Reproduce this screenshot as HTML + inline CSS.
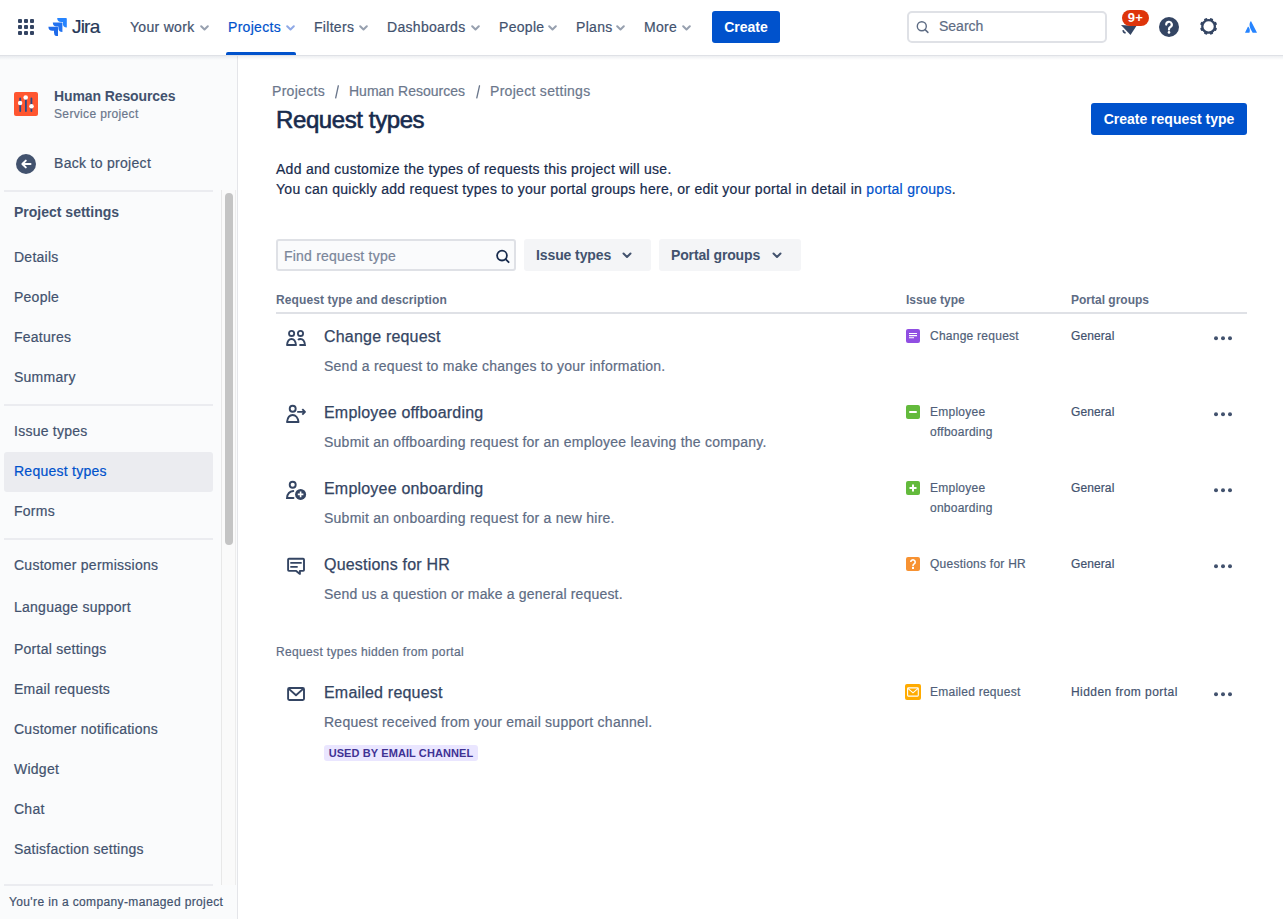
<!DOCTYPE html>
<html><head><meta charset="utf-8">
<style>
*{box-sizing:border-box;margin:0;padding:0}
html,body{width:1283px;height:919px;overflow:hidden;background:#fff}
body{font-family:"Liberation Sans",sans-serif;color:#172B4D;position:relative;-webkit-text-stroke-width:0.2px}
.a{position:absolute;white-space:nowrap}
#nav{position:absolute;left:0;top:0;width:1283px;height:56px;background:#fff;border-bottom:1px solid #DFE1E6;z-index:5}
#navsh{position:absolute;left:0;top:56px;width:1283px;height:4px;background:linear-gradient(rgba(9,30,66,0.07),rgba(9,30,66,0));z-index:4}
.ni{position:absolute;top:18px;font-size:14px;line-height:18px;color:#42526E;letter-spacing:0.3px;white-space:nowrap}
.chev{position:absolute;top:24.5px}
#side{position:absolute;left:0;top:56px;width:238px;height:863px;background:#FAFBFC;border-right:1px solid #E4E5E9}
.si{position:absolute;left:14px;font-size:14px;line-height:18px;color:#42526E;letter-spacing:0.25px;white-space:nowrap}
.dv{position:absolute;left:4px;width:209px;height:2px;background:#EBECF0}
.rt{position:absolute;left:324px;font-size:16px;line-height:20px;color:#344563;letter-spacing:0.2px;white-space:nowrap;-webkit-text-stroke:0.25px #344563}
.rd{position:absolute;left:324px;font-size:14px;line-height:20px;color:#5E6C84;letter-spacing:0.24px;white-space:nowrap}
.it{position:absolute;left:930px;font-size:12px;line-height:20px;color:#505F79;letter-spacing:0.25px;white-space:nowrap}
.pg{position:absolute;left:1071px;font-size:12px;line-height:20px;color:#42526E;letter-spacing:0.1px;white-space:nowrap}
.dots{position:absolute;left:1213px}
.ic{position:absolute;left:282px}
.iti{position:absolute;left:906px;width:14px;height:14px;border-radius:2px}
</style></head><body>
<div id="nav">
  <svg class="a" style="left:18px;top:19px" width="16" height="16" viewBox="0 0 16 16" fill="#344563">
    <rect x="0" y="0" width="4" height="4" rx="1"/><rect x="6" y="0" width="4" height="4" rx="1"/><rect x="12" y="0" width="4" height="4" rx="1"/>
    <rect x="0" y="6" width="4" height="4" rx="1"/><rect x="6" y="6" width="4" height="4" rx="1"/><rect x="12" y="6" width="4" height="4" rx="1"/>
    <rect x="0" y="12" width="4" height="4" rx="1"/><rect x="6" y="12" width="4" height="4" rx="1"/><rect x="12" y="12" width="4" height="4" rx="1"/>
  </svg>
  <svg class="a" style="left:48px;top:17px" width="19" height="19" viewBox="0 0 19 19">
    <path d="M18 1H9.2a4 4 0 0 0 4 4h1.6v1.6a4 4 0 0 0 4 3.9V1.8A.8.8 0 0 0 18 1z" fill="#2684FF"/>
    <path d="M13.6 5.4H4.8a4 4 0 0 0 4 4h1.6V11a4 4 0 0 0 4 4V6.2a.8.8 0 0 0-.8-.8z" fill="#2272F0"/>
    <path d="M9.2 9.8H.4a4 4 0 0 0 4 4H6v1.6a4 4 0 0 0 4 4V10.6a.8.8 0 0 0-.8-.8z" fill="#1F6BEA"/>
  </svg>
  <div class="a" style="left:72px;top:15px;font-size:19px;line-height:24px;color:#253858;letter-spacing:-0.8px">Jira</div>
  <div class="ni" style="left:130px">Your work</div>
  <div class="ni" style="left:228px;color:#0052CC">Projects</div>
  <div class="ni" style="left:314px">Filters</div>
  <div class="ni" style="left:387px">Dashboards</div>
  <div class="ni" style="left:499px">People</div>
  <div class="ni" style="left:576px">Plans</div>
  <div class="ni" style="left:644px">More</div>
  <svg class="chev" style="left:200px" width="9" height="6" viewBox="0 0 9 6"><path d="M1.2 1.2l3.3 3.3 3.3-3.3" fill="none" stroke="#97A0AF" stroke-width="2" stroke-linecap="round" stroke-linejoin="round"/></svg>
  <svg class="chev" style="left:286px" width="9" height="6" viewBox="0 0 9 6"><path d="M1.2 1.2l3.3 3.3 3.3-3.3" fill="none" stroke="#8FA9E6" stroke-width="2" stroke-linecap="round" stroke-linejoin="round"/></svg>
  <svg class="chev" style="left:359px" width="9" height="6" viewBox="0 0 9 6"><path d="M1.2 1.2l3.3 3.3 3.3-3.3" fill="none" stroke="#97A0AF" stroke-width="2" stroke-linecap="round" stroke-linejoin="round"/></svg>
  <svg class="chev" style="left:471px" width="9" height="6" viewBox="0 0 9 6"><path d="M1.2 1.2l3.3 3.3 3.3-3.3" fill="none" stroke="#97A0AF" stroke-width="2" stroke-linecap="round" stroke-linejoin="round"/></svg>
  <svg class="chev" style="left:548px" width="9" height="6" viewBox="0 0 9 6"><path d="M1.2 1.2l3.3 3.3 3.3-3.3" fill="none" stroke="#97A0AF" stroke-width="2" stroke-linecap="round" stroke-linejoin="round"/></svg>
  <svg class="chev" style="left:616px" width="9" height="6" viewBox="0 0 9 6"><path d="M1.2 1.2l3.3 3.3 3.3-3.3" fill="none" stroke="#97A0AF" stroke-width="2" stroke-linecap="round" stroke-linejoin="round"/></svg>
  <svg class="chev" style="left:682px" width="9" height="6" viewBox="0 0 9 6"><path d="M1.2 1.2l3.3 3.3 3.3-3.3" fill="none" stroke="#97A0AF" stroke-width="2" stroke-linecap="round" stroke-linejoin="round"/></svg>
  <div class="a" style="left:226px;top:52px;width:70px;height:3px;background:#0052CC;border-radius:2px 2px 0 0"></div>
  <div class="a" style="left:712px;top:11px;width:68px;height:32px;background:#0052CC;border-radius:3px;color:#fff;font-weight:bold;-webkit-text-stroke-width:0;font-size:14px;line-height:32px;text-align:center">Create</div>
  <div class="a" style="left:907px;top:11px;width:200px;height:32px;border:2px solid #DFE1E6;border-radius:5px;background:#fff"></div>
  <svg class="a" style="left:916px;top:21px" width="14" height="13" viewBox="0 0 14 13"><circle cx="5.8" cy="5.3" r="4.5" fill="none" stroke="#5E6C84" stroke-width="1.4"/><path d="M9.1 8.6l2.8 2.8" stroke="#5E6C84" stroke-width="1.5" stroke-linecap="round"/></svg>
  <div class="ni" style="left:939px;top:17px;color:#5E6C84;letter-spacing:0">Search</div>
  <!-- bell -->
  <svg class="a" style="left:1115px;top:8px" width="40" height="32" viewBox="0 0 40 32"><path d="M6 17L21.4 18 15.5 27Z" fill="#344563"/><path d="M8.3 22.2C8.1 23.5 9 24.6 10.6 24.9" fill="none" stroke="#344563" stroke-width="1.6"/></svg>
  <div class="a" style="left:1122px;top:10px;width:27px;height:16px;border-radius:8px;background:#DE350B;color:#fff;font-weight:bold;-webkit-text-stroke-width:0;font-size:13px;line-height:16px;text-align:center;letter-spacing:0.3px">9+</div>
  <!-- help -->
  <svg class="a" style="left:1159px;top:17px" width="20" height="20" viewBox="0 0 20 20"><circle cx="10" cy="10" r="10" fill="#344563"/><path d="M7.2 7.6a2.8 2.8 0 1 1 4.2 2.4c-.9.5-1.4 1-1.4 2v.6" fill="none" stroke="#fff" stroke-width="2.2" stroke-linecap="round"/><circle cx="10" cy="15.4" r="1.3" fill="#fff"/></svg>
  <!-- gear -->
  <svg class="a" style="left:1196px;top:14px" width="26" height="26" viewBox="0 0 26 26"><g transform="translate(12.6 12.4)" fill="#344563"><circle r="7.4"/><rect x="-1.7" y="-8.6" width="3.4" height="17.2" rx="1" transform="rotate(22.5)"/><rect x="-1.7" y="-8.6" width="3.4" height="17.2" rx="1" transform="rotate(67.5)"/><rect x="-1.7" y="-8.6" width="3.4" height="17.2" rx="1" transform="rotate(112.5)"/><rect x="-1.7" y="-8.6" width="3.4" height="17.2" rx="1" transform="rotate(157.5)"/><circle r="5.1" fill="#fff"/></g></svg>
  <!-- atlassian -->
  <svg class="a" style="left:1245px;top:21px" width="12" height="12" viewBox="0 0 12 12"><path d="M3.4 5.8c-.2-.2-.4-.2-.5 0L.1 11.4c-.1.2 0 .4.2.4h3.9c.1 0 .2-.1.3-.2.8-1.8.3-4.5-1.1-5.8z" fill="#2684FF"/><path d="M5.6.3c-1.5 2.4-1.4 5 .1 8l1.8 3.3c.1.1.2.2.3.2h3.9c.2 0 .3-.2.2-.4L6.1.3C6 .1 5.7.1 5.6.3z" fill="#2684FF"/></svg>
</div>
<div id="navsh"></div>
<div id="side">
</div>
<!-- sidebar contents (absolute to page) -->
<div class="a" style="left:14px;top:92px;width:24px;height:24px;border-radius:2px;background:#FF5630"></div>
<svg class="a" style="left:14px;top:92px" width="24" height="24" viewBox="0 0 24 24"><g stroke="#2A4B85" stroke-width="1.8" stroke-linecap="round"><path d="M6.2 6.5v12.5M11.9 6v13M17.4 6.5v12.5"/></g><g fill="#fff"><circle cx="6.1" cy="11" r="2.2"/><circle cx="11.7" cy="5.5" r="2.3"/><circle cx="17.5" cy="14.2" r="2.3"/></g></svg>
<div class="si" style="left:54px;top:87px;font-weight:bold;-webkit-text-stroke-width:0;letter-spacing:-0.1px">Human Resources</div>
<div class="a" style="left:54px;top:106px;font-size:12px;line-height:16px;color:#6B778C;letter-spacing:0.35px">Service project</div>
<svg class="a" style="left:16px;top:154px" width="20" height="20" viewBox="0 0 20 20"><circle cx="10" cy="10" r="10" fill="#42526E"/><path d="M14.5 10H6.5M9.8 6.6L6.4 10l3.4 3.4" fill="none" stroke="#fff" stroke-width="2" stroke-linecap="round" stroke-linejoin="round"/></svg>
<div class="si" style="left:54px;top:154px;letter-spacing:0.3px">Back to project</div>
<div class="dv" style="top:190px"></div>
<div class="si" style="top:203px;font-weight:bold;-webkit-text-stroke-width:0;letter-spacing:0">Project settings</div>
<div class="si" style="top:248px">Details</div>
<div class="si" style="top:288px">People</div>
<div class="si" style="top:328px">Features</div>
<div class="si" style="top:368px">Summary</div>
<div class="dv" style="top:404px"></div>
<div class="si" style="top:422px">Issue types</div>
<div class="a" style="left:4px;top:452px;width:209px;height:40px;border-radius:3px;background:#EBECF0"></div>
<div class="si" style="top:462px;color:#0052CC">Request types</div>
<div class="si" style="top:502px">Forms</div>
<div class="dv" style="top:538px"></div>
<div class="si" style="top:556px">Customer permissions</div>
<div class="si" style="top:598px">Language support</div>
<div class="si" style="top:640px">Portal settings</div>
<div class="si" style="top:680px">Email requests</div>
<div class="si" style="top:720px">Customer notifications</div>
<div class="si" style="top:760px">Widget</div>
<div class="si" style="top:800px">Chat</div>
<div class="si" style="top:840px">Satisfaction settings</div>
<!-- scrollbar -->
<div class="a" style="left:221px;top:190px;width:15px;height:695px;background:#FAFAFA;border-left:1px solid #E8E8E8;border-right:1px solid #EDEDED"></div>
<div class="a" style="left:225px;top:193px;width:8px;height:352px;border-radius:4px;background:#C4C4C4"></div>
<!-- footer -->
<div class="a" style="left:0;top:885px;width:237px;height:34px;background:#FAFBFC"></div>
<div class="dv" style="top:884px"></div>
<div class="a" style="left:9px;top:894px;font-size:12px;line-height:16px;color:#42526E;letter-spacing:0.37px">You're in a company-managed project</div>

<!-- main -->
<div class="a" style="left:272px;top:81px;font-size:14px;line-height:20px;color:#6B778C;letter-spacing:0.3px">Projects</div>
<svg class="a" style="left:330px;top:82px" width="160" height="20" viewBox="0 0 160 20" stroke="#6B778C" stroke-width="1.35" stroke-linecap="round"><path d="M8.3 3.8L5.7 15.9M149.5 3.8L146.8 15.9"/></svg>
<div class="a" style="left:349px;top:81px;font-size:14px;line-height:20px;color:#6B778C;letter-spacing:0px">Human Resources</div>

<div class="a" style="left:490px;top:81px;font-size:14px;line-height:20px;color:#6B778C;letter-spacing:0.3px">Project settings</div>
<div class="a" style="left:276px;top:106px;font-size:24px;line-height:28px;color:#172B4D;letter-spacing:-0.4px;-webkit-text-stroke-width:0.6px">Request types</div>
<div class="a" style="left:1091px;top:103px;width:156px;height:32px;border-radius:3px;background:#0052CC;color:#fff;font-weight:bold;-webkit-text-stroke-width:0;font-size:14px;line-height:32px;text-align:center">Create request type</div>
<div class="a" style="left:276px;top:159px;font-size:14px;line-height:20px;color:#172B4D;letter-spacing:0.28px">Add and customize the types of requests this project will use.</div>
<div class="a" style="left:276px;top:179px;font-size:14px;line-height:20px;color:#172B4D;letter-spacing:0.28px">You can quickly add request types to your portal groups here, or edit your portal in detail in <span style="color:#0052CC">portal groups</span>.</div>

<!-- filters -->
<div class="a" style="left:276px;top:239px;width:240px;height:32px;border:2px solid #DFE1E6;border-radius:3px;background:#FAFBFC"></div>
<div class="a" style="left:284px;top:246px;font-size:14px;line-height:20px;color:#7A869A;letter-spacing:0.22px">Find request type</div>
<svg class="a" style="left:494px;top:248px" width="17" height="16" viewBox="0 0 17 16"><circle cx="8" cy="7.6" r="4.9" fill="none" stroke="#172B4D" stroke-width="1.8"/><path d="M11.6 11.2l3 3" stroke="#172B4D" stroke-width="1.8" stroke-linecap="round"/></svg>
<div class="a" style="left:524px;top:239px;width:127px;height:32px;border-radius:3px;background:#F4F5F7"></div>
<div class="a" style="left:536px;top:245px;font-size:14px;line-height:20px;color:#42526E;font-weight:bold;-webkit-text-stroke-width:0;letter-spacing:-0.1px">Issue types</div>
<svg class="a" style="left:622px;top:252px" width="10" height="7" viewBox="0 0 10 7"><path d="M1.5 1.5l3.5 3.5 3.5-3.5" fill="none" stroke="#42526E" stroke-width="2" stroke-linecap="round" stroke-linejoin="round"/></svg>
<div class="a" style="left:659px;top:239px;width:142px;height:32px;border-radius:3px;background:#F4F5F7"></div>
<div class="a" style="left:671px;top:245px;font-size:14px;line-height:20px;color:#42526E;font-weight:bold;-webkit-text-stroke-width:0;letter-spacing:-0.15px">Portal groups</div>
<svg class="a" style="left:772px;top:252px" width="10" height="7" viewBox="0 0 10 7"><path d="M1.5 1.5l3.5 3.5 3.5-3.5" fill="none" stroke="#42526E" stroke-width="2" stroke-linecap="round" stroke-linejoin="round"/></svg>

<!-- table header -->
<div class="a" style="left:276px;top:292px;font-size:12px;line-height:16px;color:#5E6C84;font-weight:bold;-webkit-text-stroke-width:0;letter-spacing:0.1px">Request type and description</div>
<div class="a" style="left:906px;top:292px;font-size:12px;line-height:16px;color:#5E6C84;font-weight:bold;-webkit-text-stroke-width:0;letter-spacing:0">Issue type</div>
<div class="a" style="left:1071px;top:292px;font-size:12px;line-height:16px;color:#5E6C84;font-weight:bold;-webkit-text-stroke-width:0;letter-spacing:0">Portal groups</div>
<div class="a" style="left:276px;top:312px;width:971px;height:2px;background:#DFE1E6"></div>

<!-- rows -->
<svg class="ic" style="top:324px" width="28" height="28" viewBox="0 0 28 28" fill="none" stroke="#344563" stroke-width="1.8"><circle cx="9.6" cy="9.4" r="2.6"/><circle cx="18.5" cy="9.4" r="2.6"/><path d="M5 21C5.4 17.4 7.2 15 9.5 15S13.6 17.4 14 21Z" stroke-linejoin="round"/><path d="M16 16C16.6 15.3 17.5 15 18.5 15 20.8 15 22.6 17.4 23 21H17.4"/></svg>
<div class="rt" style="top:327px">Change request</div>
<div class="rd" style="top:356px">Send a request to make changes to your information.</div>
<div class="iti" style="top:329px;background:#904EE2"></div>
<svg class="a" style="left:906px;top:329px" width="14" height="14" viewBox="0 0 14 14" stroke="#fff" stroke-width="1.1"><path d="M3 4.5h8M3 6.6h8M3 8.7h5"/></svg>
<div class="it" style="top:326px">Change request</div>
<div class="pg" style="top:326px">General</div>

<svg class="ic" style="top:400px" width="28" height="28" viewBox="0 0 28 28" fill="none" stroke="#344563" stroke-width="1.9"><circle cx="10.7" cy="8.8" r="3"/><path d="M5 22C5.5 17.8 7.8 15 10.7 15S16 17.8 16.5 22Z" stroke-linejoin="round"/><path d="M15.2 11.9H22.6M20.3 9.2L23 11.9 20.3 14.6" stroke-linejoin="round"/></svg>
<div class="rt" style="top:403px">Employee offboarding</div>
<div class="rd" style="top:432px">Submit an offboarding request for an employee leaving the company.</div>
<div class="iti" style="top:405px;background:#63BA3C"></div>
<div class="a" style="left:909px;top:411px;width:8px;height:2px;background:#fff;border-radius:1px"></div>
<div class="it" style="top:402px">Employee<br>offboarding</div>
<div class="pg" style="top:402px">General</div>

<svg class="ic" style="top:476px" width="28" height="28" viewBox="0 0 28 28" fill="none" stroke="#344563" stroke-width="1.9"><circle cx="10.7" cy="8.8" r="3"/><path d="M11.3 15C7.8 15.2 5.4 18 5 22H11.5" stroke-linecap="round"/><circle cx="18.6" cy="18.4" r="5.5" fill="#344563" stroke="none"/><path d="M18.6 15.6v5.6M15.8 18.4h5.6" stroke="#fff" stroke-width="1.6"/></svg>
<div class="rt" style="top:479px">Employee onboarding</div>
<div class="rd" style="top:508px">Submit an onboarding request for a new hire.</div>
<div class="iti" style="top:481px;background:#63BA3C"></div>
<svg class="a" style="left:906px;top:481px" width="14" height="14" viewBox="0 0 14 14"><path d="M7 3.5v7M3.5 7h7" stroke="#fff" stroke-width="2"/></svg>
<div class="it" style="top:478px">Employee<br>onboarding</div>
<div class="pg" style="top:478px">General</div>

<svg class="ic" style="top:552px" width="28" height="28" viewBox="0 0 28 28" fill="none" stroke="#344563" stroke-width="1.9"><path d="M7 6.8H21.1A1 1 0 0 1 22 7.7V17.9A1 1 0 0 1 21.1 18.9H17.9V21.9L14.2 18.9H7A1 1 0 0 1 6.1 17.9V7.7A1 1 0 0 1 7 6.8Z" stroke-linejoin="round"/><path d="M8.3 10.9H19.7M8.3 14.9H15.7"/></svg>
<div class="rt" style="top:555px">Questions for HR</div>
<div class="rd" style="top:584px;letter-spacing:0.17px">Send us a question or make a general request.</div>
<div class="iti" style="top:557px;background:#F79232"></div>
<svg class="a" style="left:906px;top:557px" width="14" height="14" viewBox="0 0 14 14"><path d="M4.8 5.1a2.2 2.2 0 1 1 3.4 1.8c-.8.5-1.2 1-1.2 1.8v.5" fill="none" stroke="#fff" stroke-width="1.6"/><rect x="6" y="10" width="2" height="2" fill="#fff"/></svg>
<div class="it" style="top:554px">Questions for HR</div>
<div class="pg" style="top:554px">General</div>

<div class="a" style="left:276px;top:644px;font-size:12px;line-height:16px;color:#5E6C84;letter-spacing:0.35px">Request types hidden from portal</div>

<svg class="ic" style="top:680px" width="28" height="28" viewBox="0 0 28 28" fill="none" stroke="#344563" stroke-width="1.9"><rect x="6.1" y="8" width="15.9" height="12" rx="1.2"/><path d="M6.6 8.6L14 15.3 21.4 8.6" stroke-linejoin="round"/></svg>
<div class="rt" style="top:683px">Emailed request</div>
<div class="rd" style="top:712px">Request received from your email support channel.</div>
<div class="a" style="left:324px;top:745px;width:154px;height:16px;border-radius:3px;background:#EAE6FF;color:#403294;font-weight:bold;-webkit-text-stroke-width:0;font-size:11px;line-height:16px;text-align:center;letter-spacing:0.1px">USED BY EMAIL CHANNEL</div>
<div class="a" style="left:905px;top:684px;width:16px;height:16px;border-radius:2px;background:#FFAB00"></div>
<svg class="a" style="left:905px;top:684px" width="16" height="16" viewBox="0 0 16 16" fill="none" stroke="#fff" stroke-width="1.1"><rect x="2.6" y="3.9" width="10.7" height="8.2" rx="0.8"/><path d="M2.9 4.4L8 8.8 13.1 4.4"/></svg>
<div class="it" style="top:682px">Emailed request</div>
<div class="pg" style="top:682px;letter-spacing:0.45px">Hidden from portal</div>

<svg class="dots" style="top:336px" width="20" height="5" viewBox="0 0 20 5" fill="#42526E"><circle cx="3" cy="2.2" r="2"/><circle cx="10" cy="2.2" r="2"/><circle cx="17" cy="2.2" r="2"/></svg>
<svg class="dots" style="top:412px" width="20" height="5" viewBox="0 0 20 5" fill="#42526E"><circle cx="3" cy="2.2" r="2"/><circle cx="10" cy="2.2" r="2"/><circle cx="17" cy="2.2" r="2"/></svg>
<svg class="dots" style="top:488px" width="20" height="5" viewBox="0 0 20 5" fill="#42526E"><circle cx="3" cy="2.2" r="2"/><circle cx="10" cy="2.2" r="2"/><circle cx="17" cy="2.2" r="2"/></svg>
<svg class="dots" style="top:564px" width="20" height="5" viewBox="0 0 20 5" fill="#42526E"><circle cx="3" cy="2.2" r="2"/><circle cx="10" cy="2.2" r="2"/><circle cx="17" cy="2.2" r="2"/></svg>
<svg class="dots" style="top:692px" width="20" height="5" viewBox="0 0 20 5" fill="#42526E"><circle cx="3" cy="2.2" r="2"/><circle cx="10" cy="2.2" r="2"/><circle cx="17" cy="2.2" r="2"/></svg>
</body></html>
